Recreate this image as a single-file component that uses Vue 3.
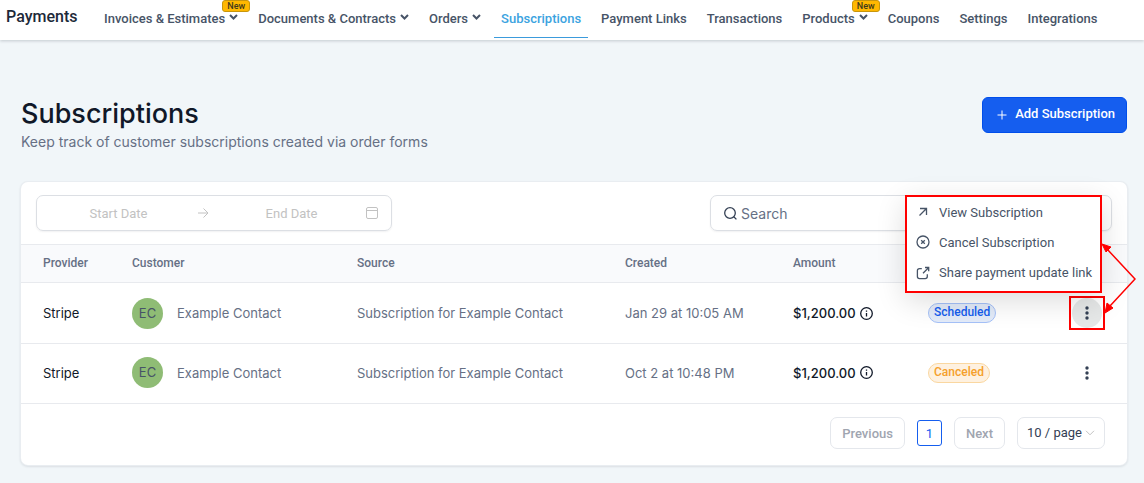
<script setup>
import { ref } from 'vue'

const navItems = [
  { label: 'Invoices & Estimates', menu: true, isNew: true },
  { label: 'Documents & Contracts', menu: true },
  { label: 'Orders', menu: true },
  { label: 'Subscriptions', active: true },
  { label: 'Payment Links' },
  { label: 'Transactions' },
  { label: 'Products', menu: true, isNew: true },
  { label: 'Coupons' },
  { label: 'Settings' },
  { label: 'Integrations' },
]

const rows = [
  { id: 1, provider: 'Stripe', initials: 'EC', customer: 'Example Contact', source: 'Subscription for Example Contact', created: 'Jan 29 at 10:05 AM', amount: '$1,200.00', status: 'Scheduled' },
  { id: 2, provider: 'Stripe', initials: 'EC', customer: 'Example Contact', source: 'Subscription for Example Contact', created: 'Oct 2 at 10:48 PM', amount: '$1,200.00', status: 'Canceled' },
]

const openRow = ref(1)
const search = ref('')
const pageSize = ref('10')

function toggle(id) {
  openRow.value = openRow.value === id ? null : id
}
</script>

<template>
  <div class="page">
    <header class="topbar">
      <span class="brand">Payments</span>
      <nav class="nav">
        <a v-for="item in navItems" :key="item.label" href="#" class="nav-item" :class="{ active: item.active }">
          {{ item.label }}
          <svg v-if="item.menu" class="chevron" viewBox="0 0 9 6" aria-hidden="true"><path d="M1 1l3.5 3.5L8 1" /></svg>
          <span v-if="item.isNew" class="badge">New</span>
        </a>
      </nav>
    </header>

    <main class="content">
      <div class="heading">
        <div>
          <h1>Subscriptions</h1>
          <p>Keep track of customer subscriptions created via order forms</p>
        </div>
        <button type="button" class="add">
          <svg viewBox="0 0 10 10" aria-hidden="true"><path d="M5 .5v9M.5 5h9" /></svg>
          Add Subscription
        </button>
      </div>

      <section class="card">
        <div class="filters">
          <div class="range">
            <input type="text" placeholder="Start Date" aria-label="Start Date" />
            <svg class="arrow" viewBox="0 0 12 12" aria-hidden="true"><path d="M1 6h10M6.5 1.5L11 6l-4.500 4.500" /></svg>
            <input class="end" type="text" placeholder="End Date" aria-label="End Date" />
            <svg class="calendar" viewBox="0 0 12 12" aria-hidden="true"><rect x=".5" y=".5" width="11" height="11" rx="1.500" /><path d="M.5 3.500h11" /></svg>
          </div>
          <label class="search">
            <svg viewBox="0 0 13 13" aria-hidden="true"><circle cx="6" cy="6" r="5.300" /><path d="M9.800 9.800l2.600 2.600" /></svg>
            <input v-model="search" type="text" placeholder="Search" aria-label="Search" />
          </label>
        </div>

        <table>
          <colgroup>
            <col class="c-provider" /><col class="c-customer" /><col /><col class="c-created" />
            <col class="c-amount" /><col class="c-status" /><col class="c-action" />
          </colgroup>
          <thead>
            <tr>
              <th>Provider</th><th>Customer</th><th>Source</th><th>Created</th><th>Amount</th><th aria-label="Status"></th><th aria-label="Actions"></th>
            </tr>
          </thead>
          <tbody>
            <tr v-for="row in rows" :key="row.id">
              <td class="dark">{{ row.provider }}</td>
              <td>
                <div class="customer"><span class="avatar">{{ row.initials }}</span>{{ row.customer }}</div>
              </td>
              <td>{{ row.source }}</td>
              <td>{{ row.created }}</td>
              <td class="dark">
                <div class="amount">
                  {{ row.amount }}
                  <svg viewBox="0 0 13 13" aria-hidden="true"><circle cx="6.500" cy="6.500" r="5.800" /><path d="M6.500 6v3.500M6.500 3.600v1.200" /></svg>
                </div>
              </td>
              <td><span class="tag" :class="row.status.toLowerCase()">{{ row.status }}</span></td>
              <td>
                <div class="action" :class="{ marked: openRow === row.id }">
                  <button type="button" class="dots" aria-label="Row actions" @click="toggle(row.id)">
                    <svg viewBox="0 0 4 14" aria-hidden="true"><circle cx="2" cy="2" r="1.700" /><circle cx="2" cy="7" r="1.700" /><circle cx="2" cy="12" r="1.700" /></svg>
                  </button>
                  <template v-if="openRow === row.id">
                    <div class="menu">
                      <button type="button">
                        <svg viewBox="0 0 14 14" aria-hidden="true"><path d="M3.500 10.500l7-7M4 3.500h6.500V10" /></svg>
                        View Subscription
                      </button>
                      <button type="button">
                        <svg viewBox="0 0 14 14" aria-hidden="true"><circle cx="7" cy="7" r="6" /><path d="M5.200 5.200l3.600 3.600M8.800 5.200L5.200 8.800" /></svg>
                        Cancel Subscription
                      </button>
                      <button type="button">
                        <svg viewBox="0 0 14 14" aria-hidden="true"><path d="M9 1.500h3.700v3.700M12.500 1.700L7 7.200M5.800 2.700H3.500C2 2.700 1.400 3.300 1.400 4.800v5.700c0 1.500.6 2.100 2.100 2.100h5.700c1.500 0 2.100-.6 2.100-2.100V8.200" /></svg>
                        Share payment update link
                      </button>
                    </div>
                    <svg class="pointer" viewBox="0 0 34 74" aria-hidden="true">
                      <path class="line" d="M5 7l28 30L8 64" />
                      <path class="head" d="M0 2l9 3-5 5zM3 71l2-10 6 5z" />
                    </svg>
                  </template>
                </div>
              </td>
            </tr>
          </tbody>
        </table>

        <footer class="pager">
          <button type="button" class="step" disabled>Previous</button>
          <button type="button" class="current">1</button>
          <button type="button" class="step" disabled>Next</button>
          <div class="size">
            <select v-model="pageSize" aria-label="Rows per page">
              <option value="10">10 / page</option>
              <option value="20">20 / page</option>
            </select>
            <svg viewBox="0 0 10 6" aria-hidden="true"><path d="M1 .8l4 4 4-4" /></svg>
          </div>
        </footer>
      </section>
    </main>
  </div>
</template>

<style>
body {
  background: #f1f6f9;
}
</style>

<style scoped>
* {
  box-sizing: border-box;
}
.page {
  min-height: 100vh;
  font-family: Inter, sans-serif;
  font-size: 13px;
  color: #667085;
}
svg {
  fill: none;
  stroke: currentColor;
  flex: none;
}
button,
input,
select {
  font: inherit;
  color: inherit;
  margin: 0;
}
button {
  cursor: pointer;
}
.topbar {
  display: flex;
  height: 40px;
  padding-left: 6px;
  background: #fff;
  box-shadow: 0 1px 3px rgba(16, 24, 40, 0.2);
  font-family: Roboto, sans-serif;
  font-weight: 500;
  white-space: nowrap;
}
.brand {
  width: 91px;
  font-size: 16px;
  line-height: 33px;
  color: #1d2939;
}
.nav {
  display: flex;
  gap: 6px;
}
.nav-item {
  position: relative;
  display: flex;
  align-items: center;
  gap: 4px;
  height: 38px;
  padding: 0 7px;
  border-bottom: 1px solid transparent;
  color: #475467;
  text-decoration: none;
}
.nav-item.active {
  color: #3ba3e0;
  border-color: #3b9bdc;
}
.chevron {
  width: 9px;
  height: 6px;
  margin-bottom: 3px;
  stroke-width: 2;
}
.badge {
  position: absolute;
  top: 0;
  right: -5px;
  height: 12px;
  padding: 0 4px;
  border: 1px solid #c8960c;
  border-radius: 3px;
  background: #ffb800;
  color: #3f3a1c;
  font-size: 9px;
  line-height: 10px;
}
.content {
  padding: 56px 17px 17px 21px;
}
.heading {
  display: flex;
  justify-content: space-between;
  align-items: flex-start;
  margin-bottom: 30px;
}
h1 {
  margin: 0;
  font-size: 27px;
  line-height: 36px;
  font-weight: 500;
  color: #101828;
}
p {
  margin: 0;
  font-size: 14px;
  line-height: 20px;
}
.add {
  display: flex;
  align-items: center;
  gap: 8px;
  height: 36px;
  margin-top: 1px;
  padding: 0 11px 3px 14px;
  border: 1px solid #004eeb;
  border-radius: 6px;
  background: #155eef;
  color: #fff;
  font-family: Roboto, sans-serif;
  font-weight: 500;
}
.add svg {
  width: 10px;
  height: 10px;
  margin-top: 3px;
}
.card {
  border-radius: 7px;
  background: #fff;
  box-shadow: 0 0 0 1px #e9edf1, 0 1px 3px rgba(16, 24, 40, 0.2);
}
.filters {
  display: flex;
  justify-content: space-between;
  padding: 13px 15px;
  border-bottom: 1px solid #e8eaee;
}
.range,
.search {
  display: flex;
  align-items: center;
  height: 36px;
  border: 1px solid #dcdfe4;
  border-radius: 7px;
  box-shadow: 0 1px 2px rgba(16, 24, 40, 0.06);
}
.range {
  width: 356px;
  padding: 0 13px 0 7px;
  color: #c2c2c2;
  font-family: Roboto, sans-serif;
}
input {
  flex: 1;
  min-width: 0;
  padding: 0;
  border: 0;
  outline: 0;
  background: transparent;
}
.range input {
  text-align: center;
}
.range .end {
  padding-left: 8px;
}
input::placeholder {
  color: inherit;
  opacity: 1;
}
.arrow,
.calendar {
  width: 12px;
  height: 12px;
}
.arrow {
  margin-left: 4px;
}
.search {
  width: 402px;
  gap: 4px;
  padding: 0 13px;
  font-size: 14px;
}
.search svg {
  width: 13px;
  height: 13px;
  color: #344054;
  stroke-width: 1.3;
}
table {
  width: 100%;
  table-layout: fixed;
  border-collapse: separate;
  border-spacing: 0;
}
.c-provider { width: 111px; }
.c-customer { width: 225px; }
.c-created { width: 168px; }
.c-amount { width: 135px; }
.c-status { width: 141px; }
.c-action { width: 58px; }
th,
td {
  padding: 0;
  border-bottom: 1px solid #e8eaee;
  text-align: left;
  white-space: nowrap;
}
th {
  height: 38px;
  padding-bottom: 2px;
  background: #f9fafc;
  font-family: Roboto, sans-serif;
  font-size: 12px;
  font-weight: 500;
}
td {
  height: 60px;
}
tbody tr:first-child td {
  height: 61px;
}
tbody tr:last-child td {
  padding-bottom: 2px;
}
th:first-child,
td:first-child {
  padding-left: 22px;
}
.dark {
  color: #101828;
}
.customer {
  display: flex;
  align-items: center;
  gap: 14px;
}
.avatar {
  width: 31px;
  height: 31px;
  border-radius: 50%;
  background: #8fbc75;
  color: #475467;
  line-height: 31px;
  text-align: center;
}
.amount {
  display: flex;
  align-items: center;
  gap: 4px;
  font-weight: 500;
}
.amount svg {
  width: 13px;
  height: 13px;
  stroke-width: 1.3;
}
.tag {
  display: inline-block;
  height: 20px;
  padding: 0 5px;
  border: 1px solid;
  border-radius: 10px;
  font-family: Roboto, sans-serif;
  font-size: 12px;
  font-weight: 500;
  line-height: 17px;
}
.scheduled {
  color: #155eef;
  border-color: #a5c1f8;
  background: #e3ebf9;
}
.canceled {
  color: #f5a02c;
  border-color: #fad7a0;
  background: #fef1e0;
}
.action {
  position: relative;
  display: flex;
  width: 36px;
  height: 34px;
  align-items: center;
  justify-content: center;
  border: 2px solid transparent;
}
.marked {
  border-color: #f00;
}
.dots {
  display: flex;
  align-items: center;
  justify-content: center;
  width: 30px;
  height: 30px;
  padding: 0;
  border: 0;
  border-radius: 50%;
  background: transparent;
  color: #344054;
}
.marked .dots {
  background: #e6e8e8;
}
.dots svg {
  width: 4px;
  height: 14px;
  fill: currentColor;
  stroke: none;
}
.menu {
  position: absolute;
  right: 1px;
  bottom: 35px;
  width: 197px;
  padding-bottom: 3px;
  border: 2px solid #f00;
  background: #fff;
  box-shadow: 0 8px 28px rgba(0, 0, 0, 0.14);
}
.menu button {
  display: flex;
  align-items: center;
  gap: 9px;
  width: 100%;
  height: 30px;
  padding: 0 9px;
  border: 0;
  background: transparent;
  color: #475467;
  font-family: Roboto, sans-serif;
  white-space: nowrap;
}
.menu button:last-child {
  height: 31px;
}
.menu svg {
  width: 14px;
  height: 14px;
  stroke-width: 1.3;
}
.pointer {
  position: absolute;
  left: 31px;
  bottom: 12px;
  width: 34px;
  height: 74px;
}
.line {
  stroke: #f00;
  stroke-width: 1.5;
}
.head {
  fill: #f00;
  stroke: #f00;
}
.pager {
  display: flex;
  justify-content: flex-end;
  align-items: center;
  gap: 12px;
  padding: 13px 22px 16px;
  font-family: Roboto, sans-serif;
}
.step,
.size {
  height: 32px;
  border: 1px solid #e4e7ec;
  border-radius: 7px;
  background: #fff;
}
.step {
  padding: 0 11px;
  color: #a0a5b0;
  font-weight: 500;
}
.current {
  width: 25px;
  height: 26px;
  padding: 0;
  border: 1px solid #155eef;
  border-radius: 3px;
  background: #fff;
  color: #155eef;
}
.size {
  display: flex;
  align-items: center;
  gap: 3px;
  padding: 0 9px;
  color: #344054;
}
.size select {
  appearance: none;
  padding: 0 0 2px;
  border: 0;
  background: transparent;
}
.size svg {
  width: 10px;
  height: 6px;
  color: #c2c2c2;
}
</style>
